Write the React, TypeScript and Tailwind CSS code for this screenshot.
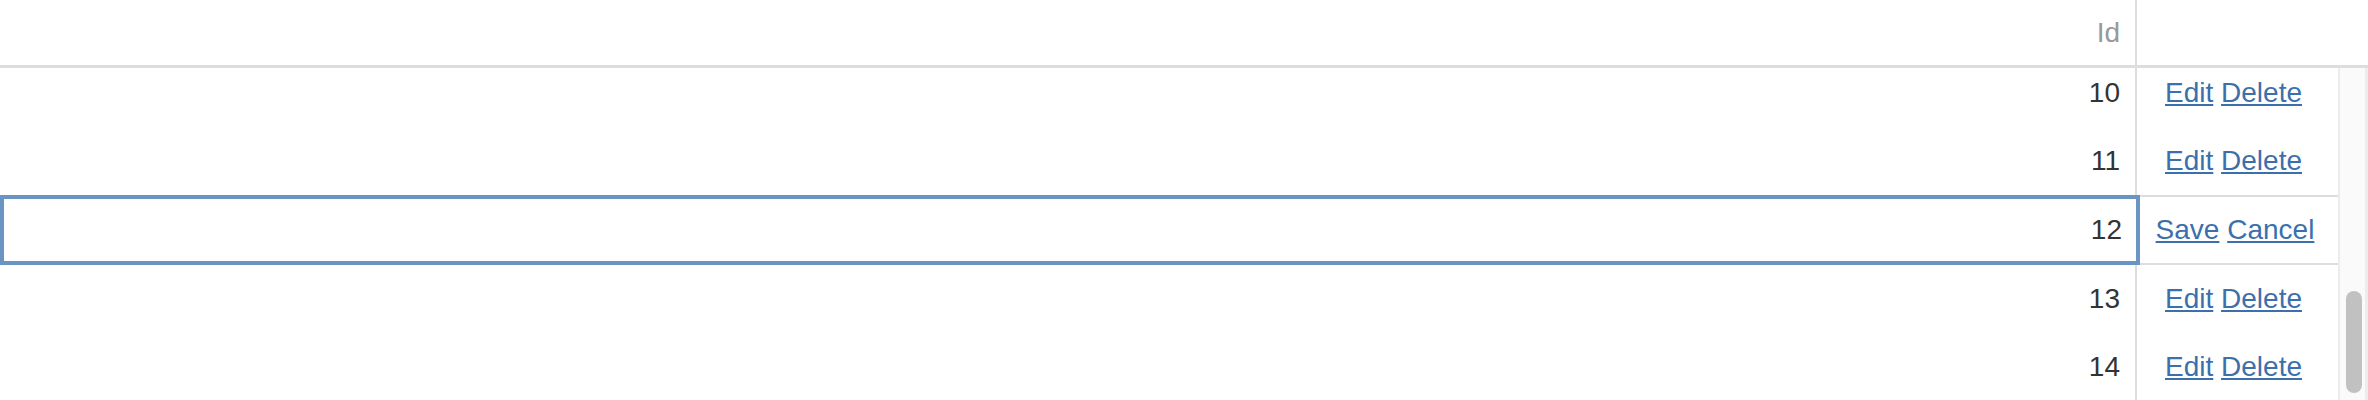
type Row = { id: number; editing?: boolean }

const rows: Row[] = [{ id: 10 }, { id: 11 }, { id: 12, editing: true }, { id: 13 }, { id: 14 }]

function RowLinks({ editing }: { editing?: boolean }) {
  const [a, b] = editing ? ['Save', 'Cancel'] : ['Edit', 'Delete']
  return (
    <span className="whitespace-pre">
      <a href="#" className="text-[#3b70ad] underline">
        {a}
      </a>{' '}
      <a href="#" className="text-[#3b70ad] underline">
        {b}
      </a>
    </span>
  )
}

function GridRow({ row }: { row: Row }) {
  if (row.editing) {
    return (
      <div className="flex h-[70px]">
        <div className="flex w-[2140px] shrink-0 items-center justify-end border-4 border-[#6a95c2] pr-[14px] text-[#333]">
          {row.id}
        </div>
        <div className="flex flex-1 items-center justify-center border-y-2 border-[#ddd] pr-2">
          <RowLinks editing />
        </div>
      </div>
    )
  }
  return (
    <div className="flex h-[68px]">
      <div className="flex w-[2137px] shrink-0 items-center justify-end border-r-2 border-[#ddd] pr-[15px] text-[#333]">
        {row.id}
      </div>
      <div className="flex flex-1 items-center justify-center pr-2">
        <RowLinks />
      </div>
    </div>
  )
}

export default function App() {
  return (
    <div className="flex h-[400px] w-[2368px] flex-col overflow-hidden bg-white font-['Liberation_Sans',Arial,sans-serif] text-[28px]">
      <div className="flex h-[68px] shrink-0 border-b-[3px] border-[#ddd]">
        <div className="flex w-[2137px] shrink-0 items-center justify-end border-r-2 border-[#ddd] pr-[15px] text-[#999]">
          Id
        </div>
        <div className="flex-1" />
      </div>

      <div className="flex min-h-0 flex-1">
        <div className="min-w-0 flex-1 overflow-hidden">
          <div className="-mt-[9px]">
            {rows.map((row) => (
              <GridRow key={row.id} row={row} />
            ))}
          </div>
        </div>

        <div className="w-[30px] shrink-0 border-l-2 border-r-[3px] border-[#ececec] bg-[#fafafa] pl-[6px] pt-[223px]">
          <div className="h-[102px] w-4 rounded-full bg-[#c1c1c1]" />
        </div>
      </div>
    </div>
  )
}
